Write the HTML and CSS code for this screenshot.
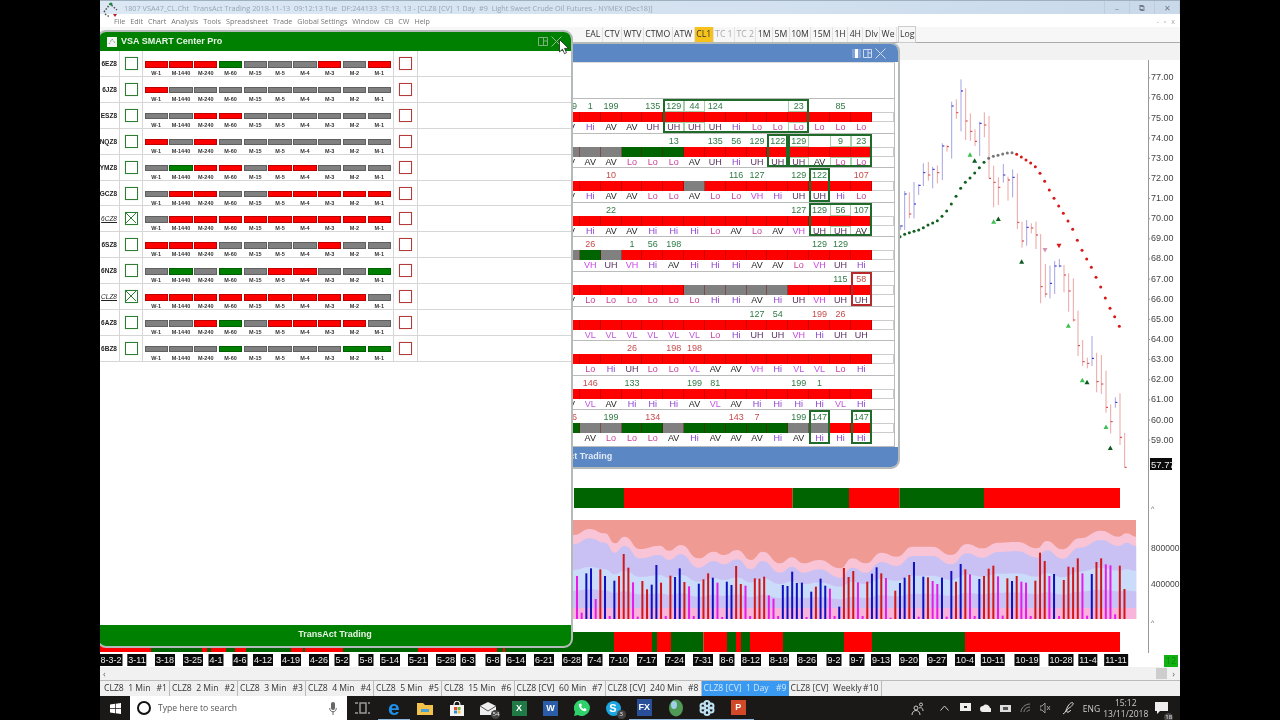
FILE: index.html
```html
<!DOCTYPE html>
<html>
<head>
    <title>TransAct Trading</title>
    <link rel="stylesheet" href="styles.css">
</head>
<body>
<div class="screen">

    <div class="titlebar">
        <span class="title-text">1807 VSA47_CL.Cht&nbsp; TransAct Trading 2018-11-13&nbsp; 09:12:13 Tue&nbsp; DF:244133&nbsp; ST:13, 13 - [CLZ8 [CV]&nbsp; 1 Day&nbsp; #9&nbsp; Light Sweet Crude Oil Futures - NYMEX (Dec18)]</span>
        <div class="win-btns">
            <span class="win-btn">&#8211;</span>
            <span class="win-btn">&#10697;</span>
            <span class="win-btn">&#10005;</span>
        </div>
    </div>

    <div class="menubar">
        <span>File</span><span>Edit</span><span>Chart</span><span>Analysis</span><span>Tools</span><span>Spreadsheet</span><span>Trade</span><span>Global Settings</span><span>Window</span><span>CB</span><span>CW</span><span>Help</span>
        <span class="mdi-btns">- &#9643; x</span>
    </div>

    <div class="toolbar">
        <span class="tool">EAL</span><span class="tool">CTV</span><span class="tool">WTV</span><span class="tool">CTMO</span><span class="tool">ATW</span><span class="tool on">CL1</span><span class="tool off">TC 1</span><span class="tool off">TC 2</span><span class="tool">1M</span><span class="tool">5M</span><span class="tool">10M</span><span class="tool">15M</span><span class="tool">1H</span><span class="tool">4H</span><span class="tool">Dlv</span><span class="tool">We</span><span class="tool log">Log</span>
    </div>

    <div class="chart-head"></div>

    <div class="chart">
        <svg id="chartSvg" class="chart-svg" viewBox="100 60 1080 593" width="1080" height="593"></svg>
    </div>

    <div class="dates" id="dates">
        <span class="count">12</span>
    </div>

    <div class="hscroll">
        <span class="scroll-left">&#8249;</span>
        <span class="scroll-thumb"></span>
        <span class="scroll-right">&#8250;</span>
    </div>

    <div class="tabs">
        <span class="tab t1"><span>CLZ8&nbsp; 1 Min</span><span>#1</span></span>
        <span class="tab t1"><span>CLZ8&nbsp; 2 Min</span><span>#2</span></span>
        <span class="tab t1"><span>CLZ8&nbsp; 3 Min</span><span>#3</span></span>
        <span class="tab t1"><span>CLZ8&nbsp; 4 Min</span><span>#4</span></span>
        <span class="tab t1"><span>CLZ8&nbsp; 5 Min</span><span>#5</span></span>
        <span class="tab t2"><span>CLZ8&nbsp; 15 Min</span><span>#6</span></span>
        <span class="tab t3"><span>CLZ8 [CV]&nbsp; 60 Min</span><span>#7</span></span>
        <span class="tab t4"><span>CLZ8 [CV]&nbsp; 240 Min</span><span>#8</span></span>
        <span class="tab t5 active"><span>CLZ8 [CV]&nbsp; 1 Day</span><span>#9</span></span>
        <span class="tab t6"><span>CLZ8 [CV]&nbsp; Weekly</span><span>#10</span></span>
    </div>

    <div class="taskbar">
        <div class="start">
            <svg width="11" height="11" viewBox="0 0 11 11"><path fill="#fff" d="M0 1.5 5 .8V5H0zM5.700.7 11 0v5H5.700zM0 5.700h5v4.500L0 9.500zM5.700 5.700H11V11l-5.300-.8z"/></svg>
        </div>
        <div class="search">
            <span class="search-ring"></span>
            <span class="search-text">Type here to search</span>
            <svg class="mic" width="8" height="13" viewBox="0 0 8 13"><rect x="2" y="0" width="4" height="8" rx="2" fill="#666"/><path d="M.7 6c0 5 6.600 5 6.600 0M4 10v3" fill="none" stroke="#666"/></svg>
        </div>
        <div class="task-icons">
            <span class="ticon"><svg width="15" height="12" viewBox="0 0 15 12"><path d="M0 1h3M0 11h3M5 1h6v10H5zM13 1h2M13 11h2" fill="none" stroke="#999" stroke-width="1.500"/></svg></span>
            <span class="ticon open"><span class="edge-e">e</span></span>
            <span class="ticon"><svg width="16" height="13" viewBox="0 0 16 13"><path fill="#f2c24b" d="M0 1h6l2 2h8v10H0z"/><path fill="#4aa3d8" d="M4 7h8v3H4z"/></svg></span>
            <span class="ticon"><svg width="14" height="15" viewBox="0 0 14 15"><path fill="#f3f3f3" d="M0 4h14v11H0z"/><path d="M4 4c0-5 6-5 6 0" fill="none" stroke="#f3f3f3" stroke-width="1.200"/><path fill="#e8472b" d="M4 6h3v3H4z"/><path fill="#6cb33f" d="M7.500 6h3v3h-3z"/><path fill="#2f8fd8" d="M4 9.500h3v3H4z"/><path fill="#f2c24b" d="M7.500 9.500h3v3h-3z"/></svg></span>
            <span class="ticon"><svg width="16" height="13" viewBox="0 0 16 13"><path fill="#eee" d="M0 4 8 0l8 4v9H0z"/><path d="M0 4l8 5 8-5" fill="none" stroke="#555"/></svg><span class="badge">54</span></span>
            <span class="ticon"><span class="app-x">X</span></span>
            <span class="ticon"><span class="app-w">W</span></span>
            <span class="ticon"><svg width="16" height="16" viewBox="0 0 16 16"><path fill="#2fd16a" d="M8 0a8 8 0 0 0-7 12L0 16l4-1A8 8 0 1 0 8 0z"/><path d="M5 4c-1 3 3 8 7 7l.5-2-2-1-1 1c-1-.5-2-1.500-2.500-2.500l1-1-1-2z" fill="#fff"/></svg></span>
            <span class="ticon"><span class="app-s">S</span><span class="badge">3</span></span>
            <span class="ticon open"><span class="app-fx">FX</span></span>
            <span class="ticon open"><svg width="14" height="18" viewBox="0 0 14 18"><ellipse cx="7" cy="9" rx="7" ry="8.500" fill="#4f9a55"/><ellipse cx="5" cy="6" rx="3" ry="4" fill="#9fd0e8"/></svg></span>
            <span class="ticon open"><svg width="16" height="16" viewBox="0 0 16 16"><g fill="none" stroke="#bfe3f5" stroke-width="2"><circle cx="8" cy="3.500" r="2.500"/><circle cx="8" cy="12.500" r="2.500"/><circle cx="4" cy="6" r="2.500"/><circle cx="12" cy="6" r="2.500"/><circle cx="4" cy="10" r="2.500"/><circle cx="12" cy="10" r="2.500"/></g></svg></span>
            <span class="ticon open"><span class="app-p">P</span></span>
        </div>
        <div class="tray">
            <svg class="tr-person" width="13" height="13" viewBox="0 0 13 13"><circle cx="5" cy="6" r="2" fill="none" stroke="#ccc"/><circle cx="10" cy="2.500" r="1.500" fill="none" stroke="#ccc"/><path d="M1 13c0-6 8-6 8 0M8 6c2-1 4 0 4 3" fill="none" stroke="#ccc"/></svg>
            <svg class="tr-up" width="9" height="6" viewBox="0 0 9 6"><path d="M.5 5.500 4.500 1l4 4.500" fill="none" stroke="#ccc"/></svg>
            <svg class="tr-ico" width="11" height="10" viewBox="0 0 11 10"><path fill="#eee" d="M0 0h11v8H0z"/><path fill="#222" d="M4 3h3v2H4z"/></svg>
            <svg class="tr-ico" width="11" height="10" viewBox="0 0 11 10"><path fill="#eee" d="M3 9a3 3 0 0 1 0-6 4 4 0 0 1 7 2 2 2 0 0 1 0 4z"/></svg>
            <svg class="tr-ico" width="11" height="10" viewBox="0 0 11 10"><path fill="#ddd" d="M0 2h11v7H0z"/><path fill="#555" d="M3 4h5v3H3z"/></svg>
            <svg class="tr-ico" width="11" height="10" viewBox="0 0 11 10"><path d="M1 9c0-4 4-8 9-8M4 9c0-3 3-5 6-5M7 9c0-1 1-2 3-2" fill="none" stroke="#888"/></svg>
            <svg class="tr-ico" width="11" height="10" viewBox="0 0 11 10"><path d="M0 3h2l3-3v10L2 7H0zM7 3l3 4M10 3 7 7" fill="none" stroke="#999"/></svg>
            <svg class="tr-pen" width="12" height="14" viewBox="0 0 12 14"><path d="M1 13c3-1 3-5 5-8s4-4 5-3-2 4-4 5-3 3-2 4 3-1 4-2" fill="none" stroke="#ddd"/></svg>
            <span class="tr-lang">ENG</span>
            <span class="tr-clock"><span>15:12</span><span>13/11/2018</span></span>
            <span class="tr-note"><svg width="13" height="12" viewBox="0 0 13 12"><path fill="#eee" d="M0 0h13v9H5l-3 3V9H0z"/></svg><span class="badge">18</span></span>
        </div>
    </div>

    <!-- ventana azul, queda debajo de la verde -->
    <div class="win win-blue">
        <div class="win-head blue-head">
            <span class="head-pin"></span>
            <svg class="head-split" width="9" height="9" viewBox="0 0 9 9"><path d="M.5.5h8v8h-8zM5 .5v8M5 4h3.500" fill="none" stroke="#cfdcf0"/></svg>
            <svg class="head-x" width="11" height="11" viewBox="0 0 11 11"><path d="M.5.5l10 10M10.500.5l-10 10" stroke="#cfdcf0"/></svg>
        </div>
        <div class="blue-body" id="blueRows"></div>
        <div class="win-foot blue-foot">TransAct Trading</div>
    </div>

    <!-- ventana verde -->
    <div class="win win-green">
        <div class="win-head green-head">
            <svg class="head-logo" width="10" height="10" viewBox="0 0 10 10"><rect width="10" height="10" fill="#f4f4f4"/><path d="M2 7 5 2l3 4" fill="none" stroke="#5a8a5a" stroke-dasharray="1 1"/></svg>
            <span class="head-title">VSA SMART Center Pro</span>
            <svg class="head-split" width="10" height="9" viewBox="0 0 10 9"><path d="M.5.5h9v8h-9zM5.500.5v8M5.500 4h4" fill="none" stroke="#7fb27f"/></svg>
            <svg class="head-x" width="11" height="11" viewBox="0 0 11 11"><path d="M.5.5l10 10M10.500.5l-10 10" stroke="#8fc08f"/></svg>
        </div>
        <div class="green-body" id="greenRows"></div>
        <div class="win-foot green-foot">TransAct Trading</div>
    </div>

    <svg class="logo" width="16" height="16" viewBox="0 0 16 16"><path d="M1 10 7 2l7 6" fill="none" stroke="#4a4a4a" stroke-dasharray="1.500 1.500" stroke-width="1.500"/><path d="M2 12l5 3" stroke="#555" stroke-dasharray="1.500 1.500" stroke-width="1.500"/><circle cx="8" cy="2" r="1.500" fill="#1a8a3a"/><path d="M10 12h4l-2 3z" fill="#b02020"/></svg>

    <svg class="cursor" width="11" height="16" viewBox="0 0 11 16"><path d="M.5.500v12.500l3-2.800 2 4.500 2-1-2-4.300h4z" fill="#fff" stroke="#222" stroke-width=".8"/></svg>
</div>
<script src="script.js"></script>
</body>
</html>
```

FILE: styles.css
```css
body {
    margin: 0;
    background-color: #000;
    font-family: "Open Sans", "Liberation Sans", sans-serif;
}

.screen {
    position: relative;
    width: 1080px;
    height: 720px;
    margin-left: 100px;
    overflow: hidden;
    display: flex;
    flex-direction: column;
    background-color: #fff;
    filter: blur(0.3px);
}

/* Barra de titulo */
.titlebar {
    height: 14px;
    display: flex;
    align-items: center;
    padding-left: 24px;
    background: linear-gradient(90deg, #dce8f4, #d3e1f0 60%, #c9d9ea);
    border-top: 1px solid #9fb0bf;
    box-sizing: border-box;
}

.title-text {
    font-size: 7.300px;
    color: #98a5b3;
    white-space: nowrap;
}

.win-btns {
    margin-left: auto;
    display: flex;
    height: 13px;
    border-left: 1px solid #c0ccd8;
}

.win-btn {
    width: 24px;
    text-align: center;
    font-size: 8px;
    line-height: 13px;
    color: #6f7c88;
    border-right: 1px solid #c0ccd8;
}

.menubar {
    height: 13px;
    display: flex;
    gap: 4.900px;
    align-items: center;
    padding-left: 14px;
    font-size: 7.200px;
    color: #777;
    background-color: #fff;
}

.mdi-btns {
    margin-left: auto;
    padding-right: 5px;
    color: #aaa;
    word-spacing: 3px;
}

/* Botones de la barra */
.toolbar {
    height: 16px;
    box-sizing: border-box;
    display: flex;
    align-items: center;
    padding-left: 484px;
    border-bottom: 1px solid #aaa;
    background-color: #f7f7f7;
    font-size: 8.700px;
    color: #333;
}

.tool {
    padding: 0 1.450px;
    line-height: 15px;
    border-right: 1px solid #e2e2e2;
    white-space: nowrap;
}

.tool.on {
    background-color: #f7c21c;
}

.tool.off {
    color: #aaa;
}

.tool.log {
    margin-left: 1px;
    padding: 0 1px;
    border: 1px solid #ccc;
}

.chart-head {
    height: 17px;
    background-color: #f2f2f2;
    border-right: 32px solid #f2f2f2;
}

.chart {
    flex: 1;
    background-color: #fff;
}

.chart-svg {
    display: block;
}

.chart-svg text {
    font-family: "Liberation Sans", sans-serif;
}

/* Fechas */
.dates {
    position: relative;
    height: 14px;
    background-color: #fff;
}

.date {
    position: absolute;
    top: 1px;
    padding: 0 1px;
    transform: translateX(-50%);
    background-color: #0a0a0a;
    color: #eee;
    font: 9px/12px "Liberation Sans", sans-serif;
    white-space: nowrap;
}

.count {
    position: absolute;
    top: 2px;
    left: 1064px;
    width: 14px;
    background-color: #12b012;
    color: #0a8a0a;
    font-size: 9px;
    line-height: 12px;
    text-align: center;
}

.hscroll {
    height: 13px;
    display: flex;
    align-items: center;
    padding: 0 2px 0 3px;
    background-color: #f1f1f1;
    color: #666;
    font-size: 9px;
}

.scroll-thumb {
    width: 11px;
    height: 11px;
    margin-left: auto;
    background-color: #cdcdcd;
}

.scroll-right {
    padding: 0 3px 0 5px;
}

/* Pestañas */
.tabs {
    height: 16px;
    display: flex;
    box-sizing: border-box;
    padding-left: 2px;
    border-top: 1px solid #bbb;
    background-color: #f0f0f0;
    font-size: 8.600px;
    line-height: 15px;
    color: #333;
}

.tab {
    display: flex;
    justify-content: space-between;
    padding: 0 2px;
    box-sizing: border-box;
    border-right: 1px solid #bbb;
    white-space: nowrap;
}

.t1 { width: 68px; }
.t2 { width: 72.500px; }
.t3 { width: 91px; }
.t4 { width: 96px; }
.t5 { width: 87px; }
.t6 { width: 93px; }

.tab.active {
    background-color: #3a9af2;
    color: #d4e8fc;
    border-right: none;
}

/* Barra de tareas */
.taskbar {
    height: 24px;
    display: flex;
    align-items: center;
    background-color: #1b1818;
    color: #ccc;
}

.start {
    width: 30px;
    display: flex;
    justify-content: center;
}

.search {
    width: 217px;
    height: 24px;
    display: flex;
    align-items: center;
    background-color: #fff;
    color: #555;
}

.search-ring {
    width: 10px;
    height: 10px;
    margin-left: 7px;
    border: 2px solid #111;
    border-radius: 50%;
}

.search-text {
    margin-left: 7px;
    font-size: 8.600px;
}

.mic {
    margin-left: auto;
    margin-right: 10px;
}

.task-icons {
    display: flex;
    height: 24px;
}

.ticon {
    position: relative;
    width: 31.300px;
    display: flex;
    align-items: center;
    justify-content: center;
    box-sizing: border-box;
}

.ticon.open {
    border-bottom: 1px solid #8fb8e0;
}

.badge {
    position: absolute;
    right: 3px;
    bottom: 1px;
    min-width: 9px;
    height: 9px;
    padding: 0 1px;
    box-sizing: border-box;
    border-radius: 50%;
    background-color: #444;
    color: #eee;
    font-size: 6px;
    line-height: 9px;
    text-align: center;
}

.edge-e {
    color: #1e90e8;
    font: bold 21px/22px "Liberation Sans", sans-serif;
}

.app-x, .app-w, .app-p, .app-fx {
    width: 15px;
    height: 15px;
    color: #fff;
    font: bold 9px/15px "Liberation Sans", sans-serif;
    text-align: center;
}

.app-x { background-color: #1f7a45; }
.app-w { background-color: #2a5ca8; }
.app-p { background-color: #d2492a; }
.app-fx { background-color: #2a4f9a; height: 17px; line-height: 17px; }

.app-s {
    width: 15px;
    height: 15px;
    border-radius: 50%;
    background-color: #1ca6e0;
    color: #fff;
    font: bold 11px/15px "Liberation Sans", sans-serif;
    text-align: center;
}

.tray {
    flex: 1;
    display: flex;
    align-items: center;
    padding-left: 157px;
}

.tr-up { margin-left: 16px; margin-right: 7px; }
.tr-ico { margin: 0 4.500px; }
.tr-pen { margin-left: 6px; }

.tr-lang {
    margin-left: 9px;
    font-size: 8.500px;
}

.tr-clock {
    display: flex;
    flex-direction: column;
    align-items: center;
    margin-left: 3px;
    font-size: 8.500px;
    line-height: 11px;
}

.tr-note {
    position: relative;
    margin-left: 7px;
}

.tr-note .badge {
    right: -5px;
    bottom: -3px;
}

/* Ventanas flotantes */
.win {
    position: absolute;
    box-sizing: border-box;
    border: 2px solid #b4bab8;
    border-radius: 9px;
    overflow: hidden;
    display: flex;
    flex-direction: column;
    background-color: #fff;
}

.win-green {
    left: -3px;
    top: 30px;
    width: 476px;
    height: 618px;
}

.win-blue {
    left: 155px;
    top: 42px;
    width: 645px;
    height: 427px;
}

.win-head {
    flex: none;
    display: flex;
    align-items: center;
    justify-content: flex-end;
}

.green-head {
    height: 19px;
    background-color: #008000;
}

.blue-head {
    height: 18px;
    background-color: #5b87c5;
}

.head-logo {
    margin-left: 8px;
}

.head-title {
    margin-left: 4px;
    margin-right: auto;
    padding-bottom: 2px;
    color: #e8f4e8;
    font: bold 9px "Liberation Sans", sans-serif;
}

.head-pin {
    width: 3px;
    height: 9px;
    margin-right: 2px;
    border: 0 solid #7fa3d6;
    border-width: 0 3px;
    background-color: #fff;
}

.head-split {
    margin-right: 3px;
}

.green-head .head-x {
    margin-right: 9px;
}

.blue-head .head-x {
    margin-right: 12px;
}

.win-foot {
    flex: none;
    text-align: center;
    font: bold 9px "Liberation Sans", sans-serif;
}

.green-foot {
    height: 21px;
    line-height: 19px;
    background-color: #008000;
    color: #e8f4e8;
}

.blue-foot {
    height: 20px;
    padding-right: 4px;
    line-height: 19px;
    background-color: #5b87c5;
    color: #e2eaf6;
}

/* Filas de la ventana verde */
.green-body {
    flex: 1;
    font-family: "Liberation Sans", sans-serif;
}

.g-row {
    display: grid;
    grid-template-columns: 21px 23px 251px 24px 1fr;
    height: 25.920px;
    box-sizing: border-box;
    border-bottom: 1px solid #d6d6d6;
}

.g-name {
    display: flex;
    align-items: center;
    justify-content: flex-end;
    padding-right: 2px;
    overflow: hidden;
    font-size: 6.500px;
    font-weight: bold;
    color: #222;
    white-space: nowrap;
    border-right: 1px solid #d6d6d6;
}

.g-name.sel {
    font-style: italic;
    font-weight: normal;
    text-decoration: underline;
}

.g-check, .g-stop {
    display: flex;
    align-items: center;
    justify-content: center;
    border-right: 1px solid #d6d6d6;
}

.box {
    width: 13px;
    height: 13px;
    box-sizing: border-box;
    border: 1.500px solid #2e7d32;
    box-shadow: 0 0 1px #a9d5a9;
}

.g-stop .box {
    border-color: #b23b3b;
    box-shadow: 0 0 1px #eeb5b5;
}

.box svg {
    display: block;
}

.g-bars {
    display: flex;
    gap: 1.400px;
    padding: 10px 0 0 1.500px;
    border-right: 1px solid #d6d6d6;
}

.g-bar {
    width: 23.400px;
    text-align: center;
    font-size: 5.500px;
    font-weight: bold;
    color: #333;
}

.swatch {
    display: block;
    height: 6.500px;
    margin-bottom: 2.500px;
    box-sizing: border-box;
    border: 1px solid rgba(0, 0, 0, 0.25);
}

.R { background-color: #f00; }
.G { background-color: #008000; }
.g { background-color: #808080; }

/* Filas de la ventana azul */
.blue-body {
    flex: 1;
    margin-right: 3px;
    padding-top: 35px;
    font-family: "Liberation Sans", sans-serif;
    font-size: 9px;
    border-top: 1px solid #ddd;
    border-right: 1px solid #bbb;
    border-bottom: 1px solid #bbb;
}

.b-row {
    display: grid;
    grid-template-columns: repeat(15, 20.850px) 1fr;
    grid-template-rows: 13px 10px 10.600px;
    height: 34.600px;
    padding-left: 302px;
    box-sizing: border-box;
    border-top: 1px solid #bbb;
}

.track {
    grid-row: 2;
    grid-column: 1 / -1;
    border: 1px solid #ccc;
    margin-left: 0;
}

.cell-bar {
    grid-row: 2;
    border-right: 1px solid rgba(120, 0, 0, 0.4);
}

.cell-bar.G {
    background-color: #006400;
}

.cell-num, .cell-lab {
    text-align: center;
}

.cell-num {
    grid-row: 1;
    line-height: 14px;
}

.cell-lab {
    grid-row: 3;
    line-height: 10px;
}

.in {
    box-sizing: border-box;
    box-shadow: inset 0 0 0 1px #a9cfa9;
}

.num-g { color: #2f7a45; }
.num-r { color: #c84a4a; }

.lab-Hi { color: #8b3fd6; }
.lab-AV { color: #222; }
.lab-UH { color: #5a2f5f; }
.lab-Lo { color: #c9419d; }
.lab-VH { color: #cc44e8; }
.lab-VL { color: #c455e0; }

.frame {
    grid-row: 1 / 4;
    box-sizing: border-box;
    border: 2px solid #1f6b2a;
    z-index: 1;
}

.frame.red {
    border-color: #b52a2a;
}

/* Logo y cursor */
.logo {
    position: absolute;
    left: 3px;
    top: 2px;
}

.cursor {
    position: absolute;
    left: 459px;
    top: 39px;
}
```

FILE: script.js
```js
// Ventana verde
var verdes = [
    ["6EZ8", "RRRGgggRgR", 0],
    ["6JZ8", "Rggggggggg", 0],
    ["ESZ8", "ggRRgggggg", 0],
    ["NQZ8", "RgRggggggg", 0],
    ["YMZ8", "gGRRgRRggg", 0],
    ["GCZ8", "gRRggRRRRR", 0],
    ["6CZ8", "gRRRRRRRRR", 1],
    ["6SZ8", "RRRggggRgg", 0],
    ["6NZ8", "gGgGgRRggG", 0],
    ["CLZ8", "RRRRRRRRRg", 1],
    ["6AZ8", "ggRGgRRRRg", 0],
    ["6BZ8", "gggGggggGG", 0]
];
var marcos = ["W-1", "M-1440", "M-240", "M-60", "M-15", "M-5", "M-4", "M-3", "M-2", "M-1"];
var equis = '<svg width="10" height="10" viewBox="0 0 10 10"><path d="M0 0l10 10M10 0L0 10" stroke="#2e7d32"/></svg>';

var html = "";
for (var i = 0; i < verdes.length; i++) {
    var v = verdes[i];
    html += '<div class="g-row"><div class="g-name' + (v[2] ? " sel" : "") + '">' + v[0] + '</div>';
    html += '<div class="g-check"><span class="box">' + (v[2] ? equis : "") + '</span></div><div class="g-bars">';
    for (var j = 0; j < 10; j++) {
        html += '<div class="g-bar"><span class="swatch ' + v[1][j] + '"></span>' + marcos[j] + '</div>';
    }
    html += '</div><div class="g-stop"><span class="box"></span></div><div></div></div>';
}
document.getElementById("greenRows").innerHTML = html;

// Ventana azul: numeros (columna:valor, g o r), barras, etiquetas y marcos
var azules = [
    { n: "0g199 1g1 2g199 4g135 5g129 6g44 7g124 11g23 13g85", b: "RRRRRRRRRRRRRRR",
      l: "AV Hi AV AV UH UH UH UH Hi Lo Lo Lo Lo Lo Lo", f: [[5, 11]], i: [5, 6, 11] },
    { n: "5g13 7g135 8g56 9g129 10g122 11g129 13g9 14g23", b: "gggGGGRRRRRRRRR",
      l: "AV AV AV Lo Lo Lo AV UH Hi UH UH UH AV Lo Lo", f: [[10, 10], [11, 14]], i: [11, 13, 14] },
    { n: "2r10 8g116 9g127 11g129 12g122 14r107", b: "RRRRRRgRRRRRRRR",
      l: "AV Hi AV AV Lo Lo AV Lo Lo VH Hi UH UH Hi Lo", f: [[12, 12]], i: [] },
    { n: "2g22 11g127 12g129 13g56 14g107", b: "RRRRRRRRRRRRRRR",
      l: "AV Hi AV AV Hi Hi Hi Lo AV Lo AV VH UH UH AV", f: [[12, 14]], i: [13] },
    { n: "1r26 3g1 4g56 5g198 12g129 13g129", b: "gGgRRRRRRRRRRRR",
      l: "- VH UH VH Hi AV Hi Hi Hi AV AV Lo VH UH Hi", f: [], i: [] },
    { n: "13g115 14r58", b: "RRRRRRgggggRRRR",
      l: "AV Lo Lo Lo Lo Lo Lo Hi Hi AV Hi UH VH UH UH", f: [[14, 14, 1]], i: [] },
    { n: "9g127 10g54 12r199 13r26", b: "RRRRRRRRRRRRRRR",
      l: "- VL VL VL VL VL VL Lo Hi UH UH VH Hi UH UH", f: [], i: [] },
    { n: "3r26 5r198 6r198", b: "RRRRRRRRRRRRRRR",
      l: "- Lo Hi UH Lo Lo VL AV AV VH Hi VL VL Lo Hi", f: [], i: [] },
    { n: "1r146 3g133 6g199 7g81 11g199 12g1", b: "RRRRRRRRRRRRRRR",
      l: "AV VL AV Hi Hi Hi AV VL AV Hi Hi Hi Hi VL Hi", f: [], i: [] },
    { n: "0r146 2g199 4r134 8r143 9r7 11g199 12g147 14g147", b: "GggGGgGGGGGggRR",
      l: "- AV Lo Lo Lo AV Hi AV AV AV Hi AV Hi Hi Hi", f: [[12, 12], [14, 14]], i: [] }
];

html = "";
for (i = 0; i < azules.length; i++) {
    var a = azules[i];
    html += '<div class="b-row"><div class="track"></div>';
    var labs = a.l.split(" ");
    for (j = 0; j < 15; j++) {
        var pos = 'style="grid-column:' + (j + 1) + '"';
        html += '<div class="cell-bar ' + a.b[j] + '" ' + pos + '></div>';
        if (labs[j] != "-") {
            html += '<div class="cell-lab lab-' + labs[j] + (a.i.indexOf(j) >= 0 ? " in" : "") + '" ' + pos + '>' + labs[j] + '</div>';
        }
    }
    a.n.split(" ").forEach(function (s) {
        var m = s.match(/^(\d+)([gr])(\d+)$/);
        var c = Number(m[1]);
        html += '<div class="cell-num num-' + m[2] + (a.i.indexOf(c) >= 0 ? " in" : "") + '" style="grid-column:' + (c + 1) + '">' + m[3] + '</div>';
    });
    a.f.forEach(function (f) {
        html += '<div class="frame' + (f[2] ? " red" : "") + '" style="grid-column:' + (f[0] + 1) + ' / ' + (f[1] + 2) + '"></div>';
    });
    html += '</div>';
}
document.getElementById("blueRows").innerHTML = html;

// Grafico, en coordenadas de pantalla
var svg = "";

function rect(x1, x2, y, h, color) {
    svg += '<rect x="' + x1 + '" y="' + y + '" width="' + (x2 - x1) + '" height="' + h + '" fill="' + color + '"/>';
}

function tira(inicio, y, h, lista, color) {
    var x = inicio;
    for (var k = 0; k < lista.length; k++) {
        rect(x, lista[k], y, h, color);
        x = lista[k];
        color = color == "#f00" ? "#006400" : "#f00";
    }
}

tira(574, 488, 20, [624, 792.6, 849, 899.6, 984, 1120], "#006400");
tira(100, 632, 20, [151, 202, 207, 211, 226, 235, 246, 291, 303, 305, 343, 418, 497, 503, 505, 614, 652, 657, 671, 703.5, 727, 736, 741, 750, 783, 844, 872, 965, 1120], "#f00");

// Bandas del panel de volumen
var onda = [[-10, 165], [10, 165], [50, 147], [90, 160], [115, 190], [140, 170], [180, 207], [230, 197], [255, 212], [285, 195], [330, 235], [370, 215], [395, 225], [430, 210], [465, 240], [495, 215], [540, 250], [570, 232], [600, 250], [640, 240], [695, 265], [725, 235], [760, 250], [800, 218], [840, 230], [880, 200], [930, 200], [980, 225], [1020, 192], [1060, 205], [1100, 188], [1150, 186], [1200, 205], [1225, 183], [1265, 208], [1310, 175], [1365, 152], [1410, 170], [1430, 160], [1455, 170]];

function px(z) { return 570 + z / 2.57; }
function py(z) { return 480 + z / 3; }

function banda(fn, color) {
    var d = "";
    for (var k = 0; k < onda.length; k++) {
        var x = px(onda[k][0]);
        var y = py(fn(onda[k][1]));
        if (k == 0) {
            d = "M" + x + " 619L" + x + " " + y;
        } else {
            var x0 = px(onda[k - 1][0]);
            var y0 = py(fn(onda[k - 1][1]));
            var mx = (x0 + x) / 2;
            d += "C" + mx + " " + y0 + " " + mx + " " + y + " " + x + " " + y;
        }
    }
    d += "L" + px(1455) + " 619Z";
    svg += '<path d="' + d + '" fill="' + color + '"/>';
}

rect(566, 1136, 520, 99, "#f09a94");
banda(function (c) { return c; }, "#f8c4d6");
banda(function (c) { return c + 28; }, "#c9c1f4");
banda(function (c) { return 295 + (c - 215) * 0.5; }, "#cbdcfb");
banda(function (c) { return 345 + (c - 215) * 0.25; }, "#c9c1f4");
rect(566, 1136, 608, 11, "#f9b4dc");

var volumen = "18m288 30m398 42b280 54b265 66m357 78r268 90b288 102m408 114b302 126r288 138r222 150r263 162m307 174m410 186r303 198r328 210b314 222b255 234r308 246m408 258r287 270b291 282b265 294r306 306m319 318m408 331b311 343r298 355r280 367b293 379m308 391m411 403b305 415b315 427r258 439r312 451m317 463m408 475r295 487r296 499r290 511m346 523m356 535m408 547b315 559b318 571b275 583b309 596b308 608m411 620b335 632r320 644b296 656b317 668m326 680m408 692b380 704r264 716r291 728r273 740m307 752m408 764r305 776b281 788b262 800r280 812m294 824m413 836r332 848b309 860b293 872r285 884b246 896m410 908b290 920r292 932m303 944m312 956b293 968m410 980b273 992r305 1004b252 1016r268 1028m283 1040m408 1052b297 1064r288 1076r266 1088r257 1100m289 1112m407 1124r295 1136b303 1148r288 1160m305 1172m308 1184m408 1196r302 1208r218 1220r243 1232m288 1244b282 1257m408 1269r300 1281r260 1293r262 1305r235 1317m280 1329m407 1341b282 1353r246 1365r235 1377m253 1389m256 1401m403 1413r257 1425r327";
var tonos = { m: "#e81ce8", b: "#1010c0", r: "#d01818" };
volumen.split(" ").forEach(function (s) {
    var m = s.match(/^(\d+)([mbr])(\d+)$/);
    var x = px(Number(m[1]));
    var y = py(Number(m[3]));
    rect(x - 1, x + 1, y, 619 - y, tonos[m[2]]);
});

// Barras de precio: x, alto, bajo, cierre, color
var barras = [[2, 495, 510, 498, "b"], [14, 393, 510, 402, "b"], [28, 397, 475, 462, "r"], [42, 366, 475, 432, "b"], [56, 373, 405, 376, "b"], [70, 310, 378, 338, "b"], [85, 306, 362, 345, "r"], [98, 320, 385, 328, "b"], [112, 316, 370, 338, "r"], [127, 250, 360, 258, "b"], [141, 255, 275, 260, "r"], [155, 125, 296, 138, "b"], [169, 118, 176, 158, "r"], [183, 58, 214, 93, "b"], [197, 85, 240, 183, "r"], [211, 160, 242, 214, "r"], [225, 208, 258, 244, "r"], [239, 185, 288, 190, "b"], [253, 157, 232, 195, "r"], [267, 168, 355, 355, "r"], [281, 317, 442, 367, "r"], [295, 352, 435, 382, "r"], [310, 312, 368, 345, "b"], [324, 350, 422, 360, "r"], [338, 328, 412, 352, "b"], [352, 340, 507, 487, "r"], [366, 485, 563, 543, "r"], [380, 480, 557, 502, "b"], [394, 490, 520, 504, "r"], [408, 485, 567, 525, "r"], [422, 522, 730, 680, "r"], [436, 612, 712, 702, "r"], [450, 617, 715, 670, "b"], [464, 603, 702, 618, "b"], [478, 597, 622, 618, "b"], [492, 615, 697, 645, "r"], [506, 640, 755, 693, "r"], [520, 655, 785, 780, "r"], [534, 752, 888, 857, "r"], [548, 840, 918, 905, "r"], [562, 893, 925, 910, "r"], [576, 828, 918, 895, "b"], [590, 878, 997, 965, "r"], [604, 885, 1002, 972, "r"], [618, 932, 1058, 1042, "r"], [632, 1033, 1120, 1085, "r"], [646, 1012, 1043, 1027, "b"], [660, 1000, 1155, 1132, "r"], [674, 1118, 1222, 1222, "r"]];

function qx(z) { return 900 + z / 3; }
function qy(z) { return 60 + z / 3; }

barras.forEach(function (b) {
    var x = qx(b[0]);
    var suave = b[4] == "r" ? "#eba6a6" : "#a4a4e4";
    var fuerte = b[4] == "r" ? "#d83030" : "#1a1ad0";
    rect(x - 0.5, x + 0.5, qy(b[1]), (b[2] - b[1]) / 3, suave);
    rect(x, x + 2, qy(b[3]) - 0.5, 1, fuerte);
});

// Puntos SAR
var verde = [530, 523, 518, 514, 510, 503, 495, 489, 482, 469, 453, 432, 409, 385, 367, 354, 339, 323, 307];
var gris = [295, 289, 286, 282, 279, 278];
var rojo = [283, 291, 300, 309, 320, 340, 364, 390, 415, 438, 460, 483, 508, 541, 571, 597, 622, 652, 681, 714, 745, 770, 799];

function puntos(lista, desde, color) {
    lista.forEach(function (y, k) {
        svg += '<circle cx="' + qx(desde + k * 14) + '" cy="' + qy(y) + '" r="1.5" fill="' + color + '"/>';
    });
}
puntos(verde, 0, "#0f5f1f");
puntos(gris, 266, "#777");
puntos(rojo, 350, "#d81818");

function triangulo(x, y, arriba, color) {
    var cx = qx(x);
    var cy = qy(y);
    var s = arriba ? -1 : 1;
    svg += '<path d="M' + (cx - 2.5) + ' ' + (cy - s * 2) + 'h5L' + cx + ' ' + (cy + s * 2.5) + 'z" fill="' + color + '"/>';
}
[[210, 284], [281, 485], [505, 797], [547, 961], [618, 1101]].forEach(function (t) { triangulo(t[0], t[1], true, "#3cc050"); });
[[224, 302], [295, 477], [365, 605], [561, 967], [631, 1164]].forEach(function (t) { triangulo(t[0], t[1], true, "#0d5a1e"); });
triangulo(477, 557, false, "#d81818");
triangulo(435, 570, false, "#d890b0");

// Eje de precios
rect(1148, 1149, 60, 593, "#999");
for (i = 0; i <= 18; i++) {
    var y = 77.3 + i * 20.13;
    svg += '<text x="1151" y="' + (y + 3) + '" font-size="9" fill="#444">' + (77 - i) + '.00</text>';
    rect(1148, 1150, y, 1, "#999");
}
rect(1150, 1172, 458, 12, "#0a0a0a");
svg += '<text x="1151" y="467.500" font-size="9.500" fill="#eee">57.77</text>';
svg += '<text x="1151" y="551" font-size="8.500" fill="#444">800000</text>';
svg += '<text x="1151" y="587" font-size="8.500" fill="#444">400000</text>';
svg += '<text x="1151" y="511" font-size="7" fill="#666">^</text>';
svg += '<text x="1151" y="625" font-size="7" fill="#666">^</text>';
document.getElementById("chartSvg").innerHTML = svg;

// Fechas del eje inferior
var fechas = "8-3-2:111 3-11:137 3-18:165 3-25:193 4-1:216 4-6:240 4-12:263 4-19:291 4-26:319 5-2:342 5-8:366 5-14:390 5-21:418 5-28:446 6-3:468 6-8:493 6-14:516 6-21:544 6-28:572 7-4:595 7-10:619 7-17:647 7-24:675 7-31:703 8-6:727 8-12:751 8-19:779 8-26:807 9-2:834 9-7:857 9-13:881 9-20:909 9-27:937 10-4:965 10-11:993 10-19:1027 10-28:1061 11-4:1088 11-11:1116";
html = "";
fechas.split(" ").forEach(function (f) {
    var p = f.split(":");
    html += '<span class="date" style="left:' + (Number(p[1]) - 100) + 'px">' + p[0] + '</span>';
});
document.getElementById("dates").insertAdjacentHTML("beforeend", html);
```
